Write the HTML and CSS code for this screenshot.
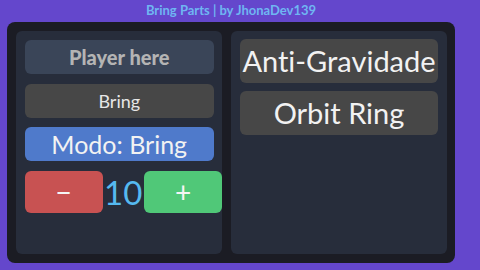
FILE: index.html
```html
<!DOCTYPE html>
<html>
<head>
<meta charset="utf-8">
<link rel="stylesheet" href="styles.css">
</head>
<body>
<div class="title">Bring Parts | by JhonaDev139</div>
<div class="frame">
  <div class="panel left">
    <div class="btn player">Player here</div>
    <div class="btn gray bring">Bring</div>
    <div class="btn blue modo">Modo: Bring</div>
    <div class="row">
      <div class="btn red step">−</div>
      <div class="count">10</div>
      <div class="btn green step">+</div>
    </div>
  </div>
  <div class="panel right">
    <div class="btn gray big">Anti-Gravidade</div>
    <div class="btn gray big">Orbit Ring</div>
  </div>
</div>
</body>
</html>
```
FILE: styles.css
```css
html, body {
  margin: 0;
  padding: 0;
}
body {
  width: 480px;
  height: 270px;
  background: #6447cc;
  font-family: Lato, "Noto Sans", sans-serif;
  font-variant-ligatures: none;
  overflow: hidden;
}
.title {
  width: 462px;
  height: 22px;
  line-height: 20px;
  text-align: center;
  color: #6fb6f2;
  font-weight: bold;
  font-size: 13px;
}
.frame {
  margin-left: 7px;
  width: 448px;
  height: 241px;
  box-sizing: border-box;
  padding: 9px 8px 9px 9px;
  background: #1b1c24;
  border-radius: 8px;
  display: flex;
  gap: 9px;
}
.panel {
  background: #272d3b;
  border-radius: 6px;
  box-sizing: border-box;
  display: flex;
  flex-direction: column;
}
.left {
  width: 206px;
  padding: 9px 8px 0 8.5px;
  gap: 9.5px;
}
.right {
  width: 216px;
  padding: 8px 9px 0 9px;
  gap: 8.5px;
}
.btn {
  border-radius: 6px;
  display: flex;
  align-items: center;
  justify-content: center;
  color: #e6e6e6;
  white-space: nowrap;
}
.player {
  height: 34px;
  background: #3a4558;
  color: #b4b4b4;
  font-weight: 900;
  font-size: 20px;
}
.gray {
  background: #474747;
}
.bring {
  height: 34px;
  font-size: 18px;
}
.blue {
  background: #4f7acb;
}
.modo {
  height: 34px;
  font-size: 25px;
  color: #f2f2f2;
}
.row {
  display: flex;
  align-items: center;
  width: 198px;
}
.step {
  width: 78px;
  height: 42px;
  flex: none;
  font-size: 28px;
  color: #f5f5f5;
}
.red {
  background: #c85252;
}
.green {
  background: #50c878;
}
.count {
  flex: none;
  width: 41.5px;
  text-align: center;
  color: #55b9f0;
  font-size: 33px;
}
.big {
  height: 43.5px;
  font-size: 29px;
  color: #f2f2f2;
}
```
